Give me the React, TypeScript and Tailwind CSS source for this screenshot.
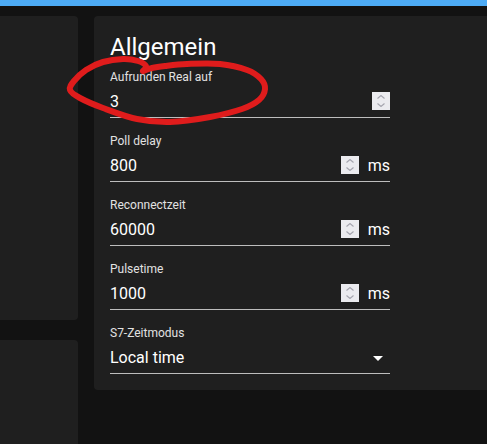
import type { ReactNode } from 'react';

// points of the hand-drawn red marker loop
const loop: [number, number][] = [
  [143, 71], [152, 68], [165, 66], [187, 64], [220, 64], [247, 70], [261, 79], [265, 89],
  [259, 100], [242, 109], [210, 117], [170, 122], [137, 119], [103, 108], [80, 98],
  [70, 90], [74, 81], [86, 70], [103, 62], [123, 59], [138, 61], [146, 66], [143, 71],
];

function smoothPath(pts: [number, number][]) {
  let d = `M${pts[0][0]} ${pts[0][1]}`;
  for (let i = 0; i < pts.length - 1; i++) {
    const p0 = pts[i - 1] || pts[i];
    const p1 = pts[i];
    const p2 = pts[i + 1];
    const p3 = pts[i + 2] || p2;
    const c1x = p1[0] + (p2[0] - p0[0]) / 6;
    const c1y = p1[1] + (p2[1] - p0[1]) / 6;
    const c2x = p2[0] - (p3[0] - p1[0]) / 6;
    const c2y = p2[1] - (p3[1] - p1[1]) / 6;
    d += ` C${c1x.toFixed(1)} ${c1y.toFixed(1)} ${c2x.toFixed(1)} ${c2y.toFixed(1)} ${p2[0]} ${p2[1]}`;
  }
  return d;
}

function Spinner() {
  return (
    <div className="flex h-[18px] w-[18px] shrink-0 flex-col items-center justify-center gap-[4px] bg-[#ebebef]">
      <svg width="8" height="4" viewBox="0 0 8 4">
        <path d="M0.5 3.5L4 0.5L7.5 3.5" fill="none" stroke="#a4a4ae" strokeWidth="1.1" />
      </svg>
      <svg width="8" height="4" viewBox="0 0 8 4">
        <path d="M0.5 0.5L4 3.5L7.5 0.5" fill="none" stroke="#a4a4ae" strokeWidth="1.1" />
      </svg>
    </div>
  );
}

interface FieldProps {
  label: string;
  children: ReactNode;
  last?: boolean;
}

function Field({ label, children, last }: FieldProps) {
  return (
    <div className={last ? 'w-[280px]' : 'mb-[15px] w-[280px]'}>
      <div className="h-[17px] text-[12px] leading-[17px] text-[#e2e2e2]">{label}</div>
      <div className="flex h-[32px] items-center border-b border-[#bdbdbd] pt-[4px] pb-[5px] text-[16px] leading-[23px] text-white">
        {children}
      </div>
    </div>
  );
}

function NumberField({ label, value, unit }: { label: string; value: string; unit?: string }) {
  return (
    <Field label={label}>
      <span className="flex-1">{value}</span>
      <Spinner />
      {unit && <span className="ml-[9px]">{unit}</span>}
    </Field>
  );
}

export default function App() {
  return (
    <div className="relative h-[444px] w-full overflow-hidden bg-[#121212] font-['Roboto',sans-serif]">
      <div className="h-[6px] bg-[#4dabf5]" />
      <div className="flex pt-[10px]">
        <div className="flex w-[78px] shrink-0 flex-col gap-5">
          <div className="h-[304px] rounded-r bg-[#1f1f1f]" />
          <div className="h-[200px] rounded-r bg-[#1f1f1f]" />
        </div>
        <div className="ml-4 flex-1 self-start rounded-l bg-[#1f1f1f] px-4 pt-4 pb-4">
          <h5 className="mb-[7px] text-[24px] leading-[30px] text-white">Allgemein</h5>
          <NumberField label="Aufrunden Real auf" value="3" />
          <NumberField label="Poll delay" value="800" unit="ms" />
          <NumberField label="Reconnectzeit" value="60000" unit="ms" />
          <NumberField label="Pulsetime" value="1000" unit="ms" />
          <Field label="S7-Zeitmodus" last>
            <span className="flex-1">Local time</span>
            <svg width="24" height="24" viewBox="0 0 24 24" className="mt-[2px]">
              <path d="M7 10l5 5 5-5z" fill="#ffffff" />
            </svg>
          </Field>
        </div>
      </div>
      <svg className="pointer-events-none absolute top-0 left-0" width="487" height="444" viewBox="0 0 487 444">
        <path d={smoothPath(loop)} fill="none" stroke="#df1c1c" strokeWidth="6" strokeLinecap="round" strokeLinejoin="round" />
      </svg>
    </div>
  );
}
